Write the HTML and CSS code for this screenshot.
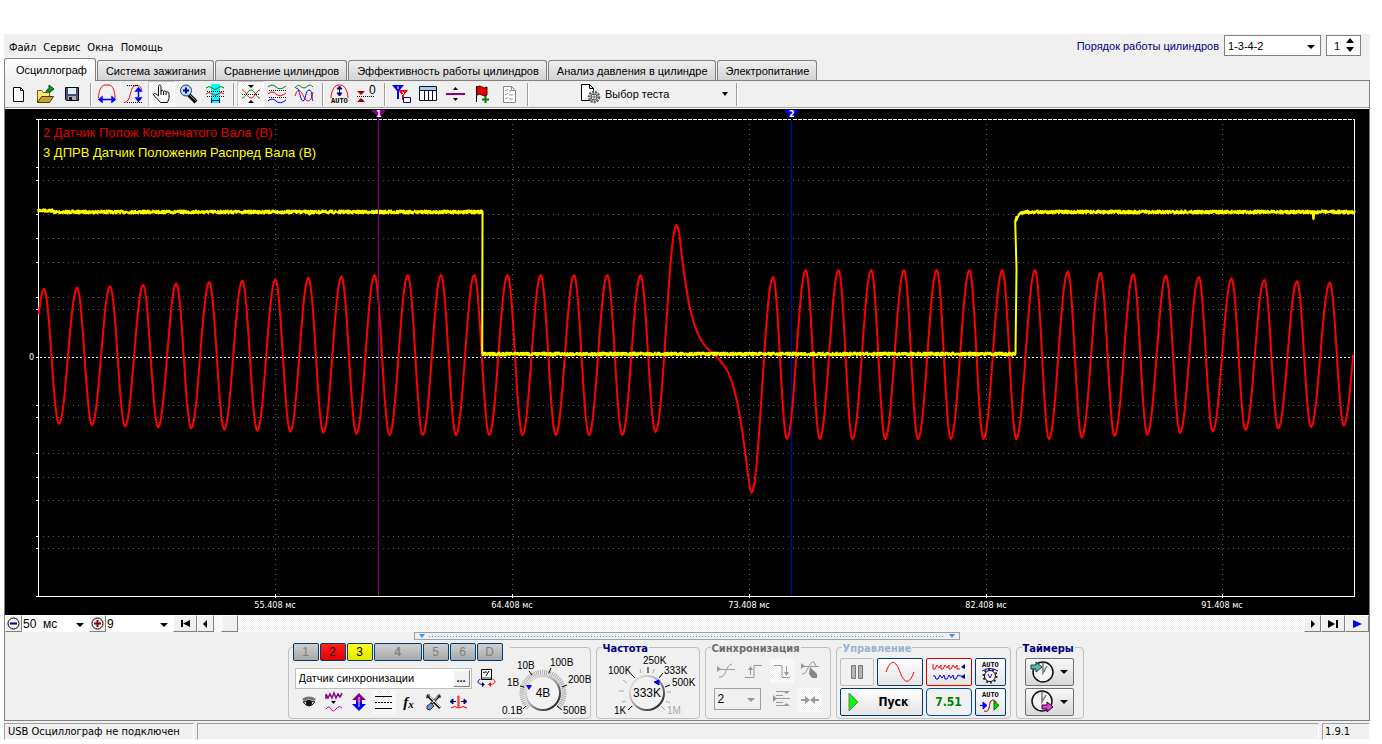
FILE: index.html
```html
<!DOCTYPE html>
<html lang="ru">
<head>
<meta charset="utf-8">
<title>USB Осциллограф</title>
<link rel="stylesheet" href="styles.css">
</head>
<body>
<div class="app">
  <header class="menubar">
    <nav class="menu">
      <a href="#file">Файл</a><a href="#service">Сервис</a><a href="#windows">Окна</a><a href="#help">Помощь</a>
    </nav>
    <div class="order">
      <label class="order-label" for="order">Порядок работы цилиндров</label>
      <span class="combo combo-order"><select id="order"><option>1-3-4-2</option></select></span>
      <span class="spin"><input type="number" value="1" aria-label="Номер цилиндра"></span>
    </div>
  </header>

  <nav class="tabs">
    <button class="tab tab-active">Осциллограф</button>
    <button class="tab">Система зажигания</button>
    <button class="tab">Сравнение цилиндров</button>
    <button class="tab">Эффективность работы цилиндров</button>
    <button class="tab">Анализ давления в цилиндре</button>
    <button class="tab">Электропитание</button>
  </nav>

  <main class="page">
    <div class="toolbar">
      <button class="tool" aria-label="Новый"><svg viewBox="0 0 22 22"><path d="M5.500 4.500h7l3 3v11h-10zM12.500 4.500v3h3" fill="#fff" stroke="#000"/></svg></button>
      <button class="tool" aria-label="Открыть"><svg viewBox="0 0 22 22"><path d="M2.500 19.500v-12h4l2 2h6v4" fill="#ffe97a" stroke="#6b5b10"/><path d="M2.500 19.500l4-6h12l-4 6z" fill="#c9a227" stroke="#4a3c05"/><path d="M11 10c0-3 1-4 3-4V2l5 4-5 4V8c-1 0-2 0-3 2z" fill="#0a9a0a" stroke="#052"/></svg></button>
      <button class="tool" aria-label="Сохранить"><svg viewBox="0 0 22 22"><path d="M3.500 4.500h13v13h-12l-1-1z" fill="#4a4f78" stroke="#000"/><path d="M6 5h8v6H6z" fill="#dff1f5"/><path d="M6 13h8v4H6z" fill="#aaa"/><path d="M7 14h3v3H7z" fill="#111"/></svg></button>
      <span class="sep"></span>
      <button class="tool" aria-label="Ширина"><svg viewBox="0 0 22 22"><path d="M1.500 15C1.500 9 4 2 8 2h4c4 0 6 7 6 13" fill="none" stroke="red"/><path d="M2 16.500h16M5 14l-3 2.500L5 19zM15 14l3 2.500-3 2.500z" stroke="blue" stroke-width="1.500" fill="blue"/></svg></button>
      <button class="tool" aria-label="Высота"><svg viewBox="0 0 22 22"><path d="M0 19.500c8 0 5-17 12-17 3 0 5 1 6 5" fill="none" stroke="red"/><path d="M3 2.500h12M3 19.500h15" stroke="#000" stroke-dasharray="1 1"/><path d="M14.500 5v13M12 8l2.500-3L17 8zM12 15l2.500 3 2.500-3z" stroke="blue" stroke-width="1.500" fill="blue"/></svg></button>
      <button class="tool pressed" aria-label="Рука"><svg viewBox="0 0 22 22"><path d="M7.500 13V3.500c0-2 2.500-2 2.500 0V8c1-1 2.500-.5 2.500.5 1-.8 2.500-.4 2.500.7 1-.8 3-.2 3 1.300v4c0 2-1 3-1.500 5H9.500C8 17 3 13.500 2.500 11.500 2.500 10 5 10 7.500 13zM10 8v4M12.500 9v3M15 9.500V12" fill="#fff" stroke="#000"/></svg></button>
      <button class="tool" aria-label="Лупа"><svg viewBox="0 0 22 22"><path d="M11 12l7 7" stroke="#000" stroke-width="4"/><path d="M12 12l6 6" stroke="#99c"/><circle cx="8" cy="7.500" r="5.500" fill="#b9e3ff" stroke="#335"/><path d="M5 7.500h6M8 4.500v6" stroke="#00a" stroke-width="2"/></svg></button>
      <button class="tool" aria-label="Фрагмент"><svg viewBox="0 0 22 22"><path d="M6 1h9v19H6z" fill="#0ff"/><path d="M1 5q3-3 6 0t6 0 6 0" fill="none" stroke="green"/><path d="M1 11q3-3 6 0t6 0 6 0" fill="none" stroke="red"/><path d="M2 8.500h17M2 13.500h17" stroke="#000" stroke-dasharray="1 1"/><path d="M6.500 15v5M14.500 15v5M7 17.500h7" stroke="#008"/></svg></button>
      <span class="sep"></span>
      <button class="tool pressed" aria-label="Совместить"><svg viewBox="0 0 22 22"><path d="M2 15c4 0 5-8 9-8s5 8 9 8" fill="none" stroke="green"/><path d="M2 7c4 0 5 8 9 8s5-8 9-8" fill="none" stroke="red"/><path d="M2 11.500h18" stroke="#000" stroke-dasharray="1 1"/><path d="M8 2h6l-3 3zM8 20h6l-3-3z"/></svg></button>
      <button class="tool" aria-label="Разделить"><svg viewBox="0 0 22 22"><path d="M1 4q4-4 8 0t10-1" fill="none" stroke="green"/><path d="M1 11q4-4 8 0t10-1" fill="none" stroke="red"/><path d="M1 18q4-4 8 0t10-1" fill="none" stroke="blue"/><path d="M2 7.500h17M2 14.500h17" stroke="#000" stroke-dasharray="1 1"/></svg></button>
      <button class="tool" aria-label="Наложить"><svg viewBox="0 0 22 22"><path d="M1 5c4-6 6 0 9 0s5-6 9-1" fill="none" stroke="green"/><path d="M1 13C4 3 7 8 10 14s7 6 9-5" fill="none" stroke="red"/><path d="M2 6c3-5 4 12 7 12s2-11 6-11 2 8 4 11" fill="none" stroke="blue"/></svg></button>
      <span class="sep"></span>
      <button class="tool" aria-label="Автомасштаб"><svg viewBox="0 0 22 22"><path d="M2 15C2 8 6 2 9 2h3c3 0 7 6 7 13" fill="none" stroke="red"/><path d="M10.500 3v10M8 6l2.500-3L13 6zM8 10l2.500 3 2.500-3z" fill="#008" stroke="#008"/><text class="auto-text" x="2" y="20">AUTO</text></svg></button>
      <button class="tool" aria-label="Обнулить"><svg viewBox="0 0 22 22"><path d="M1 8h8l-4 4zM1 19h8l-4-4z" fill="#900"/><path d="M1 13.500h18" stroke="#000" stroke-dasharray="1 1"/><text class="zero-text" x="13" y="11">0</text></svg></button>
      <span class="sep"></span>
      <button class="tool" aria-label="Маркеры"><svg viewBox="0 0 22 22"><path d="M1 2h12L8 8v8H6V8z" fill="#00f"/><path d="M7 7h10l-4 5v5h-2v-5z" fill="red"/><path d="M7 3v3M11 9l2 1-2 2" stroke="#fff" fill="none"/><path d="M12.500 14.500h7v5h-7z" fill="#fff" stroke="#008"/></svg></button>
      <button class="tool" aria-label="Таблица"><svg viewBox="0 0 22 22"><path d="M1.500 3.500h17v14h-17z" fill="#fff" stroke="#001830"/><path d="M2 4h16v3H2z" fill="#a9c8ee"/><path d="M2 7.500h16M6.500 7v10M10.500 7v10M14.500 7v10" stroke="#111"/></svg></button>
      <button class="tool" aria-label="Линия"><svg viewBox="0 0 22 22"><path d="M1 10h19v2H1z" fill="#808"/><path d="M8 7h5l-2.500-3zM8 15h5l-2.500 3z"/></svg></button>
      <button class="tool" aria-label="Флаг"><svg viewBox="0 0 22 22"><path d="M4.500 3v16" stroke="#000"/><path d="M5 4q3-2 5 0t5 0v8q-3 2-5 0t-5 0z" fill="#e00" stroke="#500"/><path d="M13.500 13v7M10 16.500h7" stroke="green" stroke-width="2"/></svg></button>
      <button class="tool" aria-label="Список"><svg viewBox="0 0 22 22"><path d="M4.500 3.500h8l4 4v12h-12zM12.500 3.500v4h4" fill="#fff" stroke="#888"/><path d="M6 7l1 1 2-2M6 11l1 1 2-2M6 15l1 1 2-2M10 8h2M10 12h4M10 16h4" stroke="#999" fill="none"/></svg></button>
      <span class="sep"></span>
      <button class="test"><svg viewBox="0 0 22 22"><path d="M2.500 1.500h8l4 4v12h-12zM10.500 1.500v4h4" fill="#fff" stroke="#000"/><circle cx="15" cy="14" r="5" fill="#d5e2d5" stroke="#566" stroke-width="2.500" stroke-dasharray="2 1"/><circle cx="15" cy="14" r="3" fill="#fff" stroke="#444"/><path d="M12 14h6M15 11v6" stroke="#666"/></svg><span>Выбор теста</span><i class="arrow"></i></button>
      <span class="sep"></span>
    </div>

    <svg class="chart" viewBox="0 0 1364 506" role="img" aria-label="Осциллограмма">
      <g id="grid"></g>
      <g class="crisp">
        <path class="dash" d="M33 10.500H1350"/>
        <path class="axis" d="M33.500 10V487.500H1350"/><path class="axis" d="M1349.500 10V488"/>
        <path class="zero" d="M31 248.500H1350"/>
      </g>
      <path class="cursor-2" d="M786.500 8V487"/>
      <path id="red" class="wave-red"/>
      <path id="yellow" class="wave-yellow"/>
      <path class="cursor-1" d="M373.500 8V487"/>
      <path d="M366 1h15l-7 8z" fill="#800080"/><path d="M779 1h15l-7 8z" fill="#00f"/>
      <text class="flag" x="371" y="8">1</text><text class="flag" x="784" y="8">2</text>
      <text class="channel ch-red" x="38" y="28">2 Датчик Полож Коленчатого Вала (В)</text>
      <text class="channel ch-yellow" x="38" y="48">3 ДПРВ Датчик Положения Распред Вала (В)</text>
      <text class="tick" x="24" y="251">0</text>
      <text class="tick mid" x="270" y="499">55.408 мс</text>
      <text class="tick mid" x="507" y="499">64.408 мс</text>
      <text class="tick mid" x="744" y="499">73.408 мс</text>
      <text class="tick mid" x="981" y="499">82.408 мс</text>
      <text class="tick mid" x="1217" y="499">91.408 мс</text>
    </svg>

    <div class="scrollrow">
      <button class="sbtn" aria-label="Уменьшить"><svg viewBox="0 0 15 15"><circle cx="7.500" cy="7.500" r="5.500" fill="#f0f0f0" stroke="#000"/><path d="M4 7.500h7" stroke="#008" stroke-width="2"/></svg></button>
      <span class="combo combo-flat"><select aria-label="Развёртка"><option>50&nbsp; мс</option></select></span>
      <button class="sbtn" aria-label="Увеличить"><svg viewBox="0 0 15 15"><circle cx="7.500" cy="7.500" r="5.500" fill="#f0f0f0" stroke="#000"/><path d="M4 7.500h7M7.500 4v7" stroke="#800" stroke-width="2"/></svg></button>
      <span class="combo combo-flat"><select aria-label="Масштаб"><option>9</option></select></span>
      <button class="sbtn wide" aria-label="В начало"><svg viewBox="0 0 15 15"><path d="M3 4h2v7H3zM12 4v7L5 7.500z"/></svg></button>
      <button class="sbtn" aria-label="Назад"><svg viewBox="0 0 15 15"><path d="M9 4v8L5 8z"/></svg></button>
      <div class="track"><span class="thumb"></span></div>
      <button class="sbtn" aria-label="Вперёд"><svg viewBox="0 0 15 15"><path d="M6 4v8l4-4z"/></svg></button>
      <button class="sbtn wide" aria-label="В конец"><svg viewBox="0 0 15 15"><path d="M2 4v8l7-4zM10 4h2v8h-2z"/></svg></button>
      <button class="sbtn wide" aria-label="Воспроизвести"><svg viewBox="0 0 15 15"><path d="M3 4v8l9-4z" fill="#00f"/></svg></button>
    </div>
    <div class="splitrow"><div class="splitter"><i></i><b></b><i></i></div></div>

    <div class="panel">
      <section class="group channels">
        <div class="chan-left">
          <div class="chan-tabs">
            <button>1</button><button class="c-red">2</button><button class="c-yellow">3</button><button class="c-wide">4</button><button>5</button><button>6</button><button>D</button>
          </div>
          <div class="sensor">
            <span class="sensor-box"><input type="text" value="Датчик синхронизации" aria-label="Датчик"><button aria-label="Выбрать датчик">...</button></span>
            <button class="mini" aria-label="Прибор"><svg viewBox="0 0 22 22"><path d="M5.500 2.500h10v10h-10z" fill="#fff" stroke="#000"/><path d="M6 10h9v2H6z" fill="#999"/><path d="M7 5l2 1M10 4v2M13 4l-3 5" stroke="#000"/><path d="M4.500 12c-4 2-3 5 2 5.500" fill="none" stroke="#008"/><path d="M6 15l3 2.500L6 20z" fill="#008"/><path d="M16.500 12c4 2 3 5-2 5.500" fill="none" stroke="red"/><path d="M15 15l-3 2.500 3 2.500z" fill="red"/></svg></button>
          </div>
          <div class="minis">
            <button class="mini" aria-label="Показать"><svg viewBox="0 0 22 22"><path d="M5 9q6-4 12 0" fill="none" stroke="#777" stroke-width="3"/><path d="M5 11q6-3 12 0-6 8-12 0z" fill="#ccc" stroke="#222"/><circle cx="11" cy="12" r="3" fill="#111"/></svg></button>
            <button class="mini" aria-label="Фильтр"><svg viewBox="0 0 22 22"><path d="M3 8V3l2 4 2-4 2 4 2-5 2 5 2-4 2 3 2-4" fill="none" stroke="#808" stroke-width="1.500"/><path d="M8 10h5l-2.500 3z"/><path d="M3 18q3-4 5 0t5 0 6-1" fill="none" stroke="#c000a0"/></svg></button>
            <button class="mini" aria-label="Инверсия"><svg viewBox="0 0 22 22"><path d="M11 2l7 7h-4v2H8V9H4z" fill="#808"/><path d="M8 11h6v2h4l-7 7-7-7h4z" fill="#00f"/><path d="M11 6v10" stroke="#f0f0f0"/></svg></button>
            <button class="mini pressed" aria-label="Линии"><svg viewBox="0 0 22 22"><path d="M2 5.500h17M2 17.500h17" stroke="#000"/><path d="M2 11.500h17" stroke="#000" stroke-dasharray="2 1"/></svg></button>
            <button class="mini fx" aria-label="Функция"><i>f</i><small>x</small></button>
            <button class="mini" aria-label="Настройки"><svg viewBox="0 0 22 22"><path d="M4 4l13 13M17 4L8 13" stroke="#222" stroke-width="2.500"/><path d="M5 4l12 12M16 4l-8 9" stroke="#eee"/><path d="M8 12l-4 3v3l3 1 4-4z" fill="#6a94d4" stroke="#235"/><path d="M3 7l3-1V3M15 4v2h3" fill="none" stroke="#222"/></svg></button>
            <button class="mini" aria-label="Импульс"><svg viewBox="0 0 22 22"><path d="M3 17q4-3 7 0V5h1v12q4-3 8 0" fill="none" stroke="red"/><path d="M2 10.500h6M13 10.500h6M5 8l-3 2.500L5 13zM16 8l3 2.500-3 2.500z" stroke="#008" fill="#008"/></svg></button>
          </div>
        </div>
        <svg class="knob knob-volt" viewBox="0 0 90 70">
          <defs><linearGradient id="rim" x1="0" y1="0" x2="1" y2="1"><stop offset="0" stop-color="#eee"/><stop offset=".4" stop-color="#bbb"/><stop offset="1" stop-color="#000"/></linearGradient></defs>
          <path d="M27 60A21 21 0 1 1 57 60" fill="none" stroke="#aaa" stroke-width="5" stroke-dasharray="1 1"/>
          <path d="M25 58l-3 3M23 39l-4-1M31 27l-3-4M48 25l2-5M61 39l5-2M56 58l5 4" stroke="#000"/>
          <circle cx="42" cy="45" r="17" fill="#f2f2f2" stroke="url(#rim)" stroke-width="2"/>
          <path d="M25 37h6l-3 5z" fill="#00f"/>
          <text class="kval" x="42" y="49">4В</text>
          <text x="1" y="66">0.1В</text><text x="6" y="38">1В</text><text x="16" y="21">10В</text><text x="49" y="18">100В</text><text x="67" y="35">200В</text><text x="62" y="66">500В</text>
        </svg>
      </section>

      <section class="group">
        <h2 class="title">Частота</h2>
        <svg class="knob knob-freq" viewBox="0 0 102 70">
          <path d="M36 58l-5 4M29 53l-4 1M27 43h-5M30 35l-4-3M44 25l-1-4M56 25l1-4M70 44h4M69 53l4 2" stroke="#aaa"/>
          <path d="M35 58l-4 4M38 30l-4-4M51 25v-6M62 30l4-5M68 39l5-2" stroke="#000"/>
          <path d="M64 58l4 4" stroke="#999"/>
          <circle cx="50" cy="45" r="17" fill="#f2f2f2" stroke="url(#rim)" stroke-width="2"/>
          <path d="M57 34l5-2v5z" fill="#00f" stroke="#00f"/>
          <text class="kval" x="50" y="49">333K</text>
          <text x="17" y="66">1K</text><text x="11" y="26">100K</text><text x="46" y="16">250K</text><text x="67" y="26">333K</text><text x="75" y="38">500K</text><text class="off" x="70" y="66">1M</text>
        </svg>
      </section>

      <section class="group sync">
        <h2 class="title t-gray">Синхронизация</h2>
        <div class="sync-grid">
          <button class="mini" disabled aria-label="Любой фронт"><svg viewBox="0 0 22 22"><path d="M2 6v6l4-3z" fill="#999"/><path d="M4 17c7 2 7-13 13-13M2 9.500h18" fill="none" stroke="#999"/></svg></button>
          <button class="mini" disabled aria-label="Фронт"><svg viewBox="0 0 22 22"><path d="M2 17.500h9v-12h8M7.500 15V7" fill="none" stroke="#999"/><path d="M5 10h5L7.500 6z" fill="#999"/></svg></button>
          <button class="mini pressed" disabled aria-label="Спад"><svg viewBox="0 0 22 22"><path d="M3 5.500h8v12h8M15.500 6v8" fill="none" stroke="#999"/><path d="M13 12h5l-2.500 4z" fill="#999"/></svg></button>
          <button class="mini" disabled aria-label="Ручной запуск"><svg viewBox="0 0 22 22"><path d="M2 3v6l4-3z" fill="#999"/><path d="M3 14C9 15 9 1 15 2l2 4M2 6.500h18" fill="none" stroke="#999"/><path d="M11 7l7 7v4h-5l-3-4z" fill="#888"/></svg></button>
          <span class="combo combo-sync"><select disabled aria-label="Канал"><option>2</option></select></span>
          <button class="mini" disabled aria-label="Уровень"><svg viewBox="0 0 22 22"><path d="M2 6v7l4-3.500zM12 2h7l-3.500 3zM12 17h7l-3.500-3z" fill="#999"/><path d="M5 2.500h9M5 6.500h7M5 9.500h14M5 13.500h7M5 16.500h9" stroke="#999"/></svg></button>
          <button class="mini pressed" disabled aria-label="Центр"><svg viewBox="0 0 22 22"><path d="M2 10h4V7l5 4-5 4v-3H2zM20 10h-4V7l-5 4 5 4v-3h4z" fill="#999"/></svg></button>
        </div>
      </section>

      <section class="group control">
        <h2 class="title t-blue">Управление</h2>
        <div class="control-grid">
          <button class="cmd cmd-off" disabled aria-label="Пауза"><svg viewBox="0 0 22 22"><path d="M5.500 4.500h4v13h-4zM12.500 4.500h4v13h-4z" fill="#b4b4b4" stroke="#777"/></svg></button>
          <button class="cmd" aria-label="Сигнал"><svg class="w32" viewBox="0 0 32 22"><path d="M2 11C8-6 13 3 16 11s8 16 14 0" fill="none" stroke="red"/></svg></button>
          <button class="cmd cmd-red" aria-label="Поток"><svg class="w36" viewBox="0 0 36 22"><path d="M2 3v5h2l2-4 2 3 2-3v4h2l2-4 2 3 2-3v4h2l2-4 2 3 2-3v4h3" fill="none" stroke="red"/><path d="M2 15h2l1 3h2l2-4 2 3 2-3 1 4h2l2-4 2 3 2-3 1 4h2l2-4 2 1h3" fill="none" stroke="blue"/><path d="M34 3v5l-4-2zM34 13v5l-4-2z" fill="#008"/></svg></button>
          <button class="cmd" aria-label="Автодиапазон"><svg class="h26" viewBox="0 0 24 26"><text class="auto-text" x="4" y="8">AUTO</text><circle cx="12" cy="17" r="6.500" fill="#fff" stroke="#333" stroke-width="2" stroke-dasharray="2 2"/><circle cx="12" cy="17" r="5.500" fill="#fff" stroke="#000"/><path d="M4 12q8-5 16 0M10 15l2 4 2-4" fill="none" stroke="#00c"/></svg></button>
          <button class="cmd start"><svg viewBox="0 0 22 22"><path d="M5 2v18l9-9z" fill="#0f0" stroke="#777"/></svg><span>Пуск</span></button>
          <output class="cmd value">7.51</output>
          <button class="cmd" aria-label="Автопуск"><svg class="h26" viewBox="0 0 24 26"><text class="auto-text" x="4" y="8">AUTO</text><path d="M6 22c8 3 3-11 9-11 3 0 3 3 3 3" fill="none" stroke="#a00"/><path d="M2 16.500h3V13l4 3.500L5 20v-3.500" fill="#00f" stroke="#00f"/><path d="M16 12v9l5-4.500z" fill="#0d0" stroke="#060"/></svg></button>
        </div>
      </section>

      <section class="group timers">
        <h2 class="title">Таймеры</h2>
        <button class="timer" aria-label="Таймер запуска"><svg viewBox="0 0 24 24"><circle cx="13" cy="12" r="10" fill="#f4f4f4" stroke="#111" stroke-width="1.500"/><path d="M13 3v10l4-7" fill="none" stroke="#777" stroke-width="1.500"/><path d="M1 5h5V2l6 5-6 5V9H1z" fill="#5cb8b0" stroke="#143"/></svg><i class="arrow"></i></button>
        <button class="timer" aria-label="Таймер остановки"><svg viewBox="0 0 24 24"><circle cx="12" cy="11" r="10" fill="#f4f4f4" stroke="#111" stroke-width="1.500"/><path d="M12 2v10l4-7" fill="none" stroke="#777" stroke-width="1.500"/><path d="M12 15h5v-3l6 5-6 5v-3h-5z" fill="#e040d0" stroke="#303"/></svg><i class="arrow"></i></button>
      </section>
    </div>
  </main>

  <footer class="status">
    <span class="cell cell-state">USB Осциллограф не подключен</span>
    <span class="cell cell-fill"></span>
    <span class="cell cell-version">1.9.1</span>
  </footer>
</div>
<script src="chart.js"></script>
</body>
</html>
```
FILE: styles.css
```css
* { box-sizing: border-box; }
body { margin: 0; background: #fff; color: #000; font: 11px/14px "Liberation Sans", Arial, sans-serif; }
button, select, input { font: inherit; color: inherit; margin: 0; padding: 0; border-radius: 0; }
button { border: 0; background: none; }
svg { display: block; }

.app { margin: 34px 12px 0 4px; background: #f0f0f0; }

/* menu bar */
.menubar { display: flex; justify-content: space-between; height: 24px; }
.menu { display: flex; gap: 7px; padding: 7px 5px 0; font: 11px/14px "DejaVu Sans Condensed", "DejaVu Sans", sans-serif; }
.menu a { color: #000; text-decoration: none; }
.order { display: flex; gap: 5px; padding: 1px 9px 2px 0; align-items: center; }
.order-label { color: #000080; }
.combo { position: relative; display: block; background: #fff; }
.combo select { appearance: none; width: 100%; height: 100%; border: 0; background: none; padding-left: 3px; outline: 0; opacity: 1; display: block; }
.combo::after { content: ""; position: absolute; right: 5px; top: 50%; margin-top: -1px; border: 4px solid transparent; border-top-color: #000; border-bottom: 0; pointer-events: none; }
.combo-order { width: 97px; height: 21px; border: 1px solid #808080; }
.spin { position: relative; width: 35px; height: 21px; border: 1px solid #808080; background: #fff; }
.spin input { appearance: textfield; width: 100%; height: 100%; border: 0; background: none; padding-left: 7px; outline: 0; }
.spin input::-webkit-inner-spin-button { display: none; }
.spin::before, .spin::after { content: ""; position: absolute; right: 6px; border: 4px solid transparent; }
.spin::before { top: 2px; border-top: 0; border-bottom-color: #000; border-bottom-width: 5px; }
.spin::after { bottom: 3px; border-bottom: 0; border-top-color: #000; border-top-width: 5px; }

/* tabs */
.tabs { display: flex; align-items: flex-end; height: 22px; gap: 1px; }
.tab { height: 20px; padding: 0 7px 0 8px; border: 1px solid #808080; border-bottom: 0; border-radius: 3px 3px 0 0; background: linear-gradient(#f0f0f0, #d2d2d2); white-space: nowrap; }
.tab-active { height: 23px; margin-bottom: -1px; padding: 0 8px 0 11px; background: linear-gradient(#fff, #f0f0f0); position: relative; }

.page { border: 1px solid #808080; }

/* toolbar */
.toolbar { display: flex; align-items: center; height: 27px; border-bottom: 1px solid #a0a0a0; }
.tool { width: 27px; height: 26px; display: grid; place-items: center; }
.tool svg, .mini svg, .test svg { width: 22px; height: 22px; }
.pressed { background: repeating-conic-gradient(#fff 0 25%, #efefef 0 50%) 0 0 / 2px 2px; }
.tool.pressed { border: 1px solid #c8c8c8; border-right-color: #fff; border-bottom-color: #fff; }
.sep { width: 8px; height: 23px; background: linear-gradient(90deg, transparent 4px, #a0a0a0 4px 5px, #fff 5px 6px, transparent 6px); }
.test { display: flex; align-items: center; gap: 4px; width: 153px; margin-left: 48px; text-align: left; }
.test span { flex: 1; }
.arrow { border: 3px solid transparent; border-top: 4px solid #000; border-bottom: 0; margin-right: 4px; }
.auto-text { font: bold 7px "Liberation Mono", monospace; }
.zero-text { font: 12px "Liberation Sans", sans-serif; }

/* oscillogram */
.chart { width: 100%; background: #000; border-top: 1px solid #fff; }
.crisp, #grid { shape-rendering: crispEdges; }
.dots { stroke: #5c5c5c; stroke-dasharray: 1 4; fill: none; }
.marks { stroke: #fff; fill: none; }
.axis { stroke: #fff; fill: none; }
.dash { stroke: #fff; stroke-dasharray: 4 1; }
.zero { stroke: #fff; stroke-dasharray: 2 2; }
.wave-red { fill: none; stroke: #f00; stroke-width: 2; stroke-linejoin: round; }
.wave-yellow { fill: none; stroke: #ff0; stroke-width: 2; stroke-linejoin: round; }
.cursor-1 { stroke: #800080; }
.cursor-2 { stroke: #0000d0; }
.flag { font: bold 8px "DejaVu Sans", sans-serif; fill: #fff; }
.channel { font: 13px "Liberation Sans", Arial, sans-serif; }
.ch-red { fill: #e00000; }
.ch-yellow { fill: #ff0; }
.tick { font: 9px "DejaVu Sans Condensed", sans-serif; fill: #fff; }
.mid { text-anchor: middle; }

/* time scroll */
.scrollrow { display: flex; height: 17px; background: #fff; }
.sbtn { flex: none; width: 17px; height: 17px; display: grid; place-items: center; background: #f0f0f0; border: 1px solid #fff; border-right-color: #808080; border-bottom-color: #808080; }
.sbtn svg { width: 15px; height: 15px; }
.wide { width: 24px; }
.combo-flat { width: 67px; height: 17px; }
.combo-flat select { padding-left: 1px; font-size: 12px; line-height: 16px; }
.track { flex: 1; padding-left: 7px; background: repeating-conic-gradient(#fff 0 25%, #efefef 0 50%) 0 0 / 2px 2px; }
.thumb { display: block; width: 17px; height: 17px; background: #f0f0f0; border: 1px solid #fff; border-right-color: #808080; border-bottom-color: #808080; }
.splitrow { display: flex; justify-content: center; height: 8px; }
.splitter { display: flex; justify-content: space-between; align-items: center; gap: 4px; width: 40%; padding: 0 4px; border: 1px solid #a0a0a0; }
.splitter i { border: 3px solid transparent; border-top: 4px solid #3399ff; border-bottom: 0; }
.splitter b { flex: 1; height: 1px; background: repeating-linear-gradient(90deg, #3399ff 0 1px, transparent 1px 3px); }

/* control panel */
.panel { display: flex; justify-content: center; gap: 5px; height: 80px; padding: 7px 3px 1px 0; }
.group { border: 1px solid #c0c0c0; border-radius: 4px; position: relative; }
.title { position: absolute; left: 5px; top: -6px; margin: 0; padding: 0 1px; background: #f0f0f0; color: #000080; font: bold 11px/14px "DejaVu Sans Condensed", "DejaVu Sans", sans-serif; }
.t-gray { color: #6d6d6d; }
.t-blue { color: #99b4d1; }
.channels { display: flex; width: 303px; padding-left: 4px; }
.chan-left { width: 208px; }
.chan-tabs { display: flex; gap: 1px; width: 217px; margin-top: -5px; background: #f0f0f0; font-size: 12px; }
.chan-tabs button { width: 26px; height: 18px; border: 1px solid #003c74; border-radius: 2px; background: linear-gradient(#d0d0d0, #a8a8a8); color: #808080; }
.chan-tabs .c-wide { width: 48px; font-weight: bold; }
.chan-tabs .c-red { background: linear-gradient(#ff2020, #e00000); color: #300; }
.chan-tabs .c-yellow { background: linear-gradient(#ffff20, #e6e600); color: #000; }
.sensor { display: flex; align-items: center; gap: 3px; height: 22px; margin: 6px 0 1px 2px; }
.sensor-box { display: flex; width: 177px; height: 21px; background: #fff; border: 1px solid #c0c0c0; }
.sensor-box input { flex: 1; min-width: 0; border: 0; background: none; padding-left: 3px; outline: 0; }
.sensor-box button { width: 17px; height: 17px; margin: 1px; line-height: 8px; font-weight: bold; background: #f0f0f0; border: 1px solid #fff; border-right-color: #808080; border-bottom-color: #808080; }
.minis { display: flex; gap: 1px; padding-left: 4px; }
.mini { flex: none; width: 24px; height: 24px; display: grid; place-items: center; }
.fx { display: flex; align-items: center; justify-content: center; font: bold 15px/20px "Liberation Serif", serif; }
.fx small { font-size: 11px; font-style: italic; padding-top: 4px; }
.knob { flex: none; height: 70px; font: 10px "Liberation Sans", Arial, sans-serif; }
.knob-volt { width: 90px; position: relative; }
.knob-freq { width: 102px; }
.kval { font-size: 12px; text-anchor: middle; }
.off { fill: #aaa; }
.sync-grid { display: grid; grid-template-columns: repeat(4, 24px); gap: 5px 4px; padding: 11px 8px 0; }
.combo-sync { grid-column: span 2; width: 47px; height: 22px; border: 1px solid #a0a0a0; background: #f0f0f0; }
.combo-sync::after { border-top-color: #999; }
.combo-sync select { color: #000; font-size: 12px; }
.control-grid { display: grid; grid-template-columns: 34px 46px 46px 31px; grid-auto-rows: 28px; gap: 2px 3px; padding: 10px 4px 0 3px; }
.cmd { display: grid; place-items: center; border: 1px solid #003c74; border-radius: 2px; background: linear-gradient(#fff, #e4e4e4); }
.cmd svg { width: 22px; height: 22px; }
.cmd .w32 { width: 32px; }
.cmd .w36 { width: 36px; }
.cmd .h26 { width: 24px; height: 26px; }
.cmd-off { border-color: #c0c0c0; background: #f0f0f0; }
.cmd-red { border-color: #e00000; }
.start { grid-column: span 2; display: flex; align-items: center; padding-left: 3px; gap: 13px; font: bold 12px/16px "DejaVu Sans Condensed", sans-serif; }
.value { color: #008000; border-color: #0050a0; border-radius: 4px; background: #f0f0f0; font: bold 12px/16px "DejaVu Sans Condensed", sans-serif; }
.timers { padding: 10px 9px 0 8px; display: flex; flex-direction: column; gap: 2px; }
.timer { display: flex; align-items: center; justify-content: space-between; width: 49px; height: 28px; padding-left: 4px; border: 1px solid #707070; border-radius: 2px; background: linear-gradient(#f8f8f8, #d8d8d8); }
.timer svg { width: 24px; height: 24px; }
.timer .arrow { border-left-width: 4px; border-right-width: 4px; margin-right: 5px; }

/* status bar */
.status { display: flex; gap: 3px; padding-top: 2px; font: 11px/14px "DejaVu Sans Condensed", "DejaVu Sans", sans-serif; }
.cell { height: 17px; padding: 1px 3px 0; border: 1px solid #a0a0a0; border-right-color: #fff; border-bottom-color: #fff; }
.cell-state { width: 190px; white-space: nowrap; }
.cell-fill { flex: 1; }
.cell-version { width: 48px; padding-left: 2px; }
```
FILE: chart.js
```js
const LEFT = 33, RIGHT = 1349;

// grid: both channels contribute their own horizontal divisions
const rows = [58, 71, 105, 129, 153, 188, 200, 296, 308, 344, 368, 391, 427, 439];
const cols = [270, 507, 744, 981, 1217];
const dots = rows.map(y => `M${LEFT} ${y}.5H${RIGHT}`).join("") + cols.map(x => `M${x}.5 10V487`).join("");
const marks = rows.map(y => `M31 ${y}.5h3`).join("") + `M31 10.5h3M31 487.5h3` + cols.map(x => `M${x}.5 485v4`).join("");
document.getElementById("grid").innerHTML =
  `<path class="dots" d="${dots}"/><path class="marks" d="${marks}"/>`;

// crankshaft sensor: alternating peaks and troughs with a missing-tooth gap
const mix = (a, b, t) => a + (b - a) * t;
const shift = i => i <= 10 ? i * 33.05 : 330.5 + (i - 10) * 33.25;
const before = [];
for (let i = -1; i < 19; i++) {
  const t = Math.min(1, Math.max(0, i / 10));
  before.push([39 + shift(i), mix(180, 166, t)]);
  before.push([54 + shift(i), mix(315, 326, t)]);
}
before[before.length - 1] = [650.5, 323];
before.push([671.5, 116]);
const gap = [[674, 122], [676, 140], [678, 157], [681, 177], [684, 195], [687, 207], [690, 218], [694, 227], [698, 234], [702, 239], [707, 244], [712, 248], [718, 255], [723, 263], [728, 276], [732, 292], [736, 313], [740, 342], [743, 366], [745, 380]];
const after = [[746.5, 384]];
for (let i = 0; i < 19; i++) {
  const t = Math.max(0, (i - 8) / 10);
  after.push([768 + i * 32.75, i === 0 ? 168 : mix(161, 175, t)]);
  after.push([782 + i * 32.75, mix(330, 315, t)]);
}
function ease(list) {
  const out = [];
  for (let k = 0; k < list.length - 1; k++) {
    const [x0, y0] = list[k], [x1, y1] = list[k + 1];
    for (let s = 0; s < 14; s++) {
      const t = s / 14;
      out.push([mix(x0, x1, t), mix(y0, y1, (1 - Math.cos(Math.PI * t)) / 2)]);
    }
  }
  out.push(list[list.length - 1]);
  return out;
}
const red = [...ease(before), ...gap, ...ease(after)].filter(p => p[0] >= LEFT && p[0] <= RIGHT);
document.getElementById("red").setAttribute("d", "M" + red.map(p => p.map(v => v.toFixed(1)).join(" ")).join("L"));

// camshaft sensor: noisy square signal
let seed = 7;
const noise = () => { seed = (seed * 16807) % 2147483647; return (seed / 2147483647 - 0.5) * 3; };
const yel = [];
for (let x = LEFT; x <= RIGHT; x++) {
  let base = 103;
  if (x < 48) base = 101.5;
  if (x >= 477 && x < 1010) base = 245;
  if (x >= 1010 && x < 1022) base = 103 + 9 * Math.exp(-(x - 1010) / 3);
  if (x === 304) base += 3;
  if (x === 1308) base += 6;
  yel.push([x + 0.2, base + noise()], [x + 0.5, base + noise()], [x + 0.8, base + noise()]);
  if (x === 476) yel.push([477.5, 103]);
  if (x === 1009) yel.push([1010.5, 245], [1011.5, 160]);
}
document.getElementById("yellow").setAttribute("d", "M" + yel.map(p => p.map(v => v.toFixed(1)).join(" ")).join("L"));
```
